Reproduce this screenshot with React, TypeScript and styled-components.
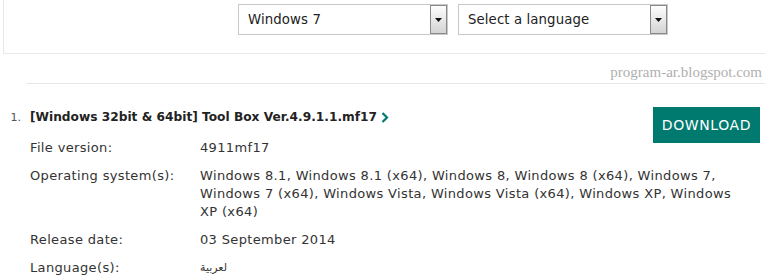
import styled, { createGlobalStyle } from "styled-components";

const GlobalStyle = createGlobalStyle`
  body {
    margin: 0;
    background: #fff;
    font-family: "DejaVu Sans", Verdana, sans-serif;
  }
`;

interface DetailRow {
  label: string;
  value: string;
  rtl?: boolean;
}

const rows: DetailRow[] = [
  { label: "File version:", value: "4911mf17" },
  {
    label: "Operating system(s):",
    value:
      "Windows 8.1, Windows 8.1 (x64), Windows 8, Windows 8 (x64), Windows 7, Windows 7 (x64), Windows Vista, Windows Vista (x64), Windows XP, Windows XP (x64)",
  },
  { label: "Release date:", value: "03 September 2014" },
  { label: "Language(s):", value: "لعربية", rtl: true },
];

function SelectBox({ value }: { value: string }) {
  return (
    <SelectStyle>
      <span>{value}</span>
      <ArrowButton>
        <svg width="7" height="4" viewBox="0 0 7 4">
          <path d="M0 0h7L3.5 4z" fill="#111" />
        </svg>
      </ArrowButton>
    </SelectStyle>
  );
}

function App() {
  return (
    <>
      <GlobalStyle />
      <FilterBar>
        <SelectBox value="Windows 7" />
        <SelectBox value="Select a language" />
      </FilterBar>
      <Watermark>program-ar.blogspot.com</Watermark>
      <DownloadList>
        <li>
          <ItemHead>
            <Title>
              [Windows 32bit &amp; 64bit] Tool Box Ver.4.9.1.1.mf17
              <svg width="8" height="11" viewBox="0 0 8 11">
                <path d="M1.5 1l4.5 4.5L1.5 10" fill="none" stroke="#00796f" strokeWidth="2.2" />
              </svg>
            </Title>
            <DownloadButton>DOWNLOAD</DownloadButton>
          </ItemHead>
          <Details>
            {rows.map((r) => (
              <DetailLine key={r.label}>
                <dt>{r.label}</dt>
                <Value $rtl={r.rtl} dir={r.rtl ? "rtl" : undefined}>
                  {r.value}
                </Value>
              </DetailLine>
            ))}
          </Details>
        </li>
      </DownloadList>
    </>
  );
}

const FilterBar = styled.div`
  margin-left: 3px;
  height: 54px;
  box-sizing: border-box;
  border-left: 1px solid #e8e8e8;
  border-bottom: 1px solid #e8e8e8;
  padding: 4px 0 0 234px;
  display: flex;
  gap: 10px;
`;

const SelectStyle = styled.div`
  width: 210px;
  height: 31px;
  box-sizing: border-box;
  border: 1px solid #c8c8c8;
  display: flex;
  align-items: center;
  justify-content: space-between;
  padding-left: 9px;
  font-family: "DejaVu Sans", Verdana, sans-serif;
  font-size: 13.3px;
  letter-spacing: 0.1px;
  color: #222;
`;

const ArrowButton = styled.div`
  width: 17px;
  height: 29px;
  box-sizing: border-box;
  border: 1px solid #8a8a8a;
  background: linear-gradient(#fdfdfd, #d4d4d4);
  display: flex;
  align-items: center;
  justify-content: center;
`;

const Watermark = styled.div`
  margin: 0 0 0 26px;
  height: 30px;
  box-sizing: border-box;
  border-bottom: 1px solid #e6e6e6;
  text-align: right;
  padding: 10px 3px 0 0;
  font-family: "Liberation Serif", "Times New Roman", serif;
  font-size: 15px;
  line-height: 17px;
  color: #b0b0b0;
`;

const DownloadList = styled.ol`
  margin: 26px 0 0;
  padding: 0 0 0 30px;
  color: #333;
  font-family: "DejaVu Sans", Verdana, sans-serif;
  font-size: 13px;
  letter-spacing: 0.35px;

  li::marker {
    content: counter(list-item) ".\\2002\\00a0";
    font-size: 11px;
    letter-spacing: 0;
    color: #555;
  }
`;

const ItemHead = styled.div`
  display: flex;
  justify-content: space-between;
  align-items: flex-start;
  padding-right: 5px;
  margin-top: -3px;
`;

const Title = styled.div`
  font-weight: bold;
  font-size: 12.2px;
  letter-spacing: 0;
  color: #222;
  padding-top: 3px;
  display: flex;
  align-items: center;
  gap: 4px;
`;

const DownloadButton = styled.div`
  background: #00796f;
  color: #fff;
  font-size: 14px;
  letter-spacing: 0.6px;
  width: 107px;
  height: 36px;
  display: flex;
  align-items: center;
  justify-content: center;
`;

const Details = styled.dl`
  margin: -4px 0 0;
`;

const DetailLine = styled.div`
  display: grid;
  grid-template-columns: 170px 1fr;
  margin-bottom: 10px;
  line-height: 18px;

  dt {
    margin: 0;
  }
`;

const Value = styled.dd<{ $rtl?: boolean }>`
  margin: 0;
  padding-right: 17px;
  text-align: left;
  font-size: ${(p) => (p.$rtl ? "11px" : "inherit")};
`;

export default App;
